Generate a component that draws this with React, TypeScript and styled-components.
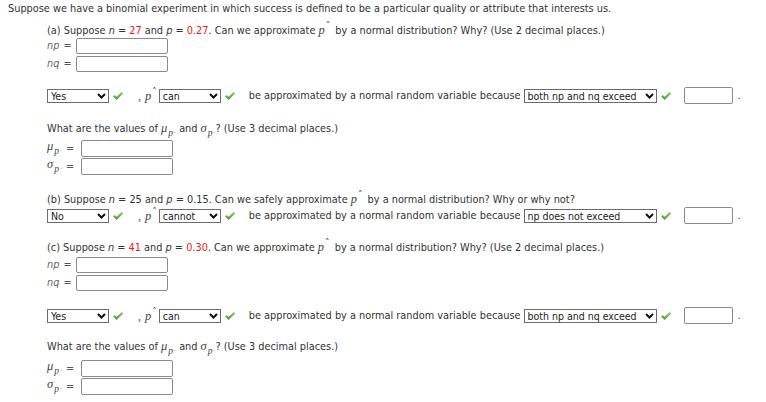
import React from "react";
import styled, { createGlobalStyle } from "styled-components";

const GlobalStyle = createGlobalStyle`
  html, body { margin: 0; padding: 0; background: #fff; }
  body {
    font-family: "DejaVu Sans Condensed", "DejaVu Sans", Verdana, sans-serif;
    font-stretch: condensed;
    font-size: 10.85px;
    color: #333;
  }
`;

const Page = styled.div`
  display: flex;
  flex-direction: column;
  padding: 2px 8px 0 8px;
`;

const TextLine = styled.div<{ $mt?: number }>`
  height: 14px;
  line-height: 14px;
  white-space: nowrap;
  margin-top: ${(p) => p.$mt ?? 0}px;
`;

const Section = styled.div`
  display: flex;
  flex-direction: column;
  padding-left: 39px;
`;

const Red = styled.span`
  color: #e8211f;
`;

const Var = styled.span`
  font-style: italic;
`;

const Serif = styled.span`
  font-family: "Liberation Serif", "DejaVu Serif", serif;
  font-style: italic;
  font-size: 12.5px;
  line-height: 0;
  color: #444;
`;

const HatMark = styled.span`
  font-family: "DejaVu Sans", sans-serif;
  font-style: normal;
  font-size: 10px;
  line-height: 0;
  vertical-align: 4px;
  margin-left: 1px;
  margin-right: 2px;
  color: #444;
`;

const Sub = styled.span`
  font-size: 9.5px;
  line-height: 0;
  vertical-align: -4px;
  margin-left: 1px;
`;

const SubDot = styled.span`
  font-family: "DejaVu Sans", sans-serif;
  font-style: normal;
  font-size: 7px;
  line-height: 0;
  vertical-align: 1px;
  margin-left: 1px;
  color: #777;
`;

const FieldRow = styled.div<{ $mt?: number; $h: number }>`
  display: flex;
  align-items: center;
  height: ${(p) => p.$h}px;
  margin-top: ${(p) => p.$mt ?? 0}px;
`;

const FieldLabel = styled.span<{ $w: number }>`
  width: ${(p) => p.$w}px;
  flex: none;
  white-space: nowrap;
  color: #666;
  font-style: italic;
  display: flex;
  align-items: center;
  line-height: 14px;
`;

const Eq = styled.span`
  font-style: normal;
  margin-left: 4px;
  color: #555;
`;

const Input = styled.div<{ $w: number; $h: number }>`
  width: ${(p) => p.$w}px;
  height: ${(p) => p.$h}px;
  box-sizing: border-box;
  border: 1px solid #8a8a8a;
  border-radius: 2px;
  background: #fff;
  flex: none;
`;

const AnswerRow = styled.div<{ $mt?: number }>`
  display: flex;
  align-items: center;
  height: 17px;
  line-height: 14px;
  white-space: nowrap;
  margin-top: ${(p) => p.$mt ?? 0}px;
`;

const SelectBox = styled.div<{ $w: number }>`
  width: ${(p) => p.$w}px;
  height: 14px;
  box-sizing: border-box;
  border: 1px solid #6b6b6b;
  background: #fff;
  display: flex;
  align-items: center;
  padding: 0 2px 0 3px;
  font-size: 10.5px;
  line-height: 12px;
  color: #222;
  flex: none;
`;

const SelectValue = styled.span`
  flex: 1;
  overflow: hidden;
`;

const Connector = styled.span`
  margin-left: 14px;
  display: inline-flex;
  align-items: baseline;
`;

const Comma = styled.span`
  font-family: "Liberation Serif", serif;
  font-style: italic;
  font-size: 12px;
  margin-right: 4px;
  color: #555;
`;

const Phrase = styled.span<{ $ml?: number }>`
  margin-left: ${(p) => p.$ml ?? 0}px;
  margin-right: 3px;
`;

const Period = styled.span`
  margin-left: 5px;
`;

const CheckWrap = styled.span`
  display: inline-flex;
  margin-left: 3px;
  width: 12px;
  height: 10px;
`;

const Chevron = () => (
  <svg width="9" height="6" viewBox="0 0 9 6" style={{ flex: "none" }}>
    <path d="M1 1 L4.5 4.5 L8 1" fill="none" stroke="#111" strokeWidth="2" />
  </svg>
);

const Check = () => (
  <CheckWrap>
    <svg width="12" height="10" viewBox="0 0 12 10">
      <defs>
        <linearGradient id="cg" x1="0" y1="0" x2="0" y2="1">
          <stop offset="0" stopColor="#8fd06b" />
          <stop offset="1" stopColor="#3f9a3a" />
        </linearGradient>
      </defs>
      <path d="M1 5.4 L2.7 3.9 L4.6 5.8 L9.6 1 L11.2 2.5 L4.6 9 Z" fill="url(#cg)" />
    </svg>
  </CheckWrap>
);

const Select = ({ w, value }: { w: number; value: string }) => (
  <SelectBox $w={w}>
    <SelectValue>{value}</SelectValue>
    <Chevron />
  </SelectBox>
);

const PHat = () => (
  <Serif>
    p<HatMark>ˆ</HatMark>
  </Serif>
);

const Decision = ({ a, b, c, mt }: { a: string; b: string; c: string; mt: number }) => (
  <AnswerRow $mt={mt}>
    <Select w={62} value={a} />
    <Check />
    <Connector>
      <Comma>,</Comma>
      <PHat />
    </Connector>
    <Select w={62} value={b} />
    <Check />
    <Phrase $ml={13}>be approximated by a normal random variable because</Phrase>
    <Select w={133} value={c} />
    <Check />
    <Input $w={49} $h={17} style={{ marginLeft: 12 }} />
    <Period>.</Period>
  </AnswerRow>
);

const NpRows = ({ mt }: { mt: number }) => (
  <>
    <FieldRow $mt={mt} $h={16}>
      <FieldLabel $w={29}>
        np<Eq>=</Eq>
      </FieldLabel>
      <Input $w={92} $h={16} />
    </FieldRow>
    <FieldRow $mt={2} $h={16}>
      <FieldLabel $w={29}>
        nq<Eq>=</Eq>
      </FieldLabel>
      <Input $w={92} $h={16} />
    </FieldRow>
  </>
);

const MuSym = ({ s }: { s: string }) => (
  <Serif>
    {s}
    <Sub>
      p<SubDot>·</SubDot>
    </Sub>
  </Serif>
);

const MomentRows = ({ mt, gap }: { mt: number; gap: number }) => (
  <>
    <TextLine $mt={mt}>
      What are the values of <MuSym s="μ" /> and <MuSym s="σ" />? (Use 3 decimal places.)
    </TextLine>
    <FieldRow $mt={gap} $h={17}>
      <FieldLabel $w={34}>
        <MuSym s="μ" />
        <Eq>=</Eq>
      </FieldLabel>
      <Input $w={92} $h={17} />
    </FieldRow>
    <FieldRow $mt={1} $h={17}>
      <FieldLabel $w={34}>
        <MuSym s="σ" />
        <Eq>=</Eq>
      </FieldLabel>
      <Input $w={92} $h={17} />
    </FieldRow>
  </>
);

export default function App() {
  return (
    <>
      <GlobalStyle />
      <Page>
        <TextLine>
          Suppose we have a binomial experiment in which success is defined to be a particular quality or attribute
          that interests us.
        </TextLine>
        <Section>
          <TextLine $mt={8}>
            (a) Suppose <Var>n</Var> = <Red>27</Red> and <Var>p</Var> = <Red>0.27</Red>. Can we approximate <PHat />{" "}
            by a normal distribution? Why? (Use 2 decimal places.)
          </TextLine>
          <NpRows mt={0} />
          <Decision a="Yes" b="can" c="both np and nq exceed" mt={15} />
          <MomentRows mt={18} gap={4} />
          <TextLine $mt={18}>
            (b) Suppose <Var>n</Var> = 25 and <Var>p</Var> = 0.15. Can we safely approximate <PHat /> by a normal
            distribution? Why or why not?
          </TextLine>
          <Decision a="No" b="cannot" c="np does not exceed" mt={0} />
          <TextLine $mt={17}>
            (c) Suppose <Var>n</Var> = <Red>41</Red> and <Var>p</Var> = <Red>0.30</Red>. Can we approximate <PHat />{" "}
            by a normal distribution? Why? (Use 2 decimal places.)
          </TextLine>
          <NpRows mt={2} />
          <Decision a="Yes" b="can" c="both np and nq exceed" mt={16} />
          <MomentRows mt={16} gap={6} />
        </Section>
      </Page>
    </>
  );
}
